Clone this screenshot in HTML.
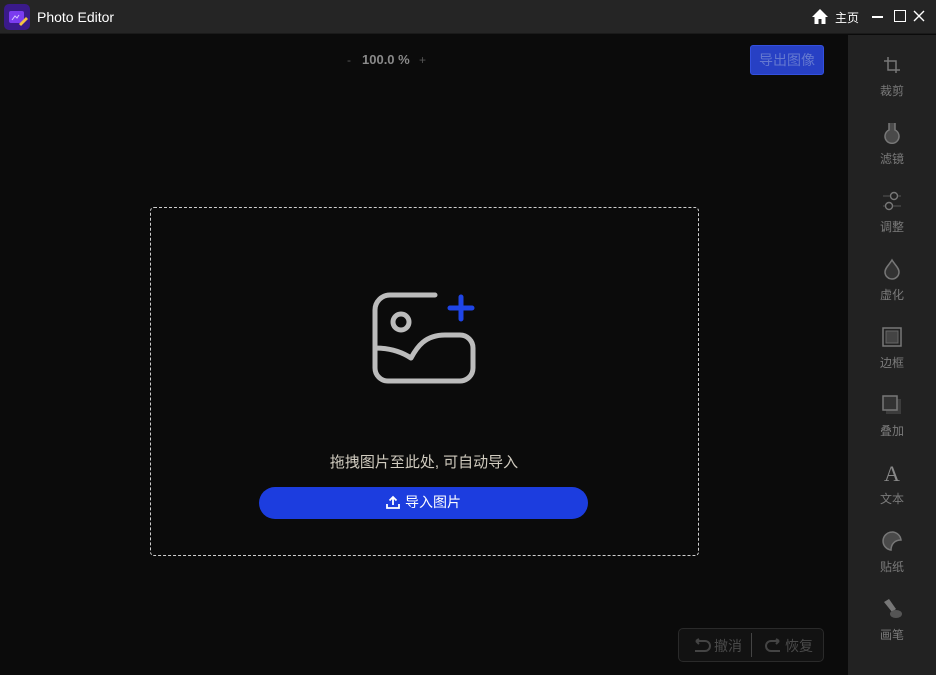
<!DOCTYPE html>
<html><head><meta charset="utf-8"><style>
*{margin:0;padding:0;box-sizing:border-box}
body{width:936px;height:675px;overflow:hidden;background:#0b0b0b;font-family:"Liberation Sans","Noto Sans CJK SC",sans-serif;position:relative}
.title{position:absolute;left:0;top:0;width:936px;height:34px;background:#252525;border-bottom:1px solid #1a1a1a}
.logo{position:absolute;left:4px;top:4px;width:26px;height:26px;border-radius:5px;background:#3a1a8a}
.title .t{position:absolute;left:37px;top:9px;color:#fff;font-size:14px}
.side{position:absolute;left:848px;top:35px;width:88px;height:640px;background:#222}
.tool{position:absolute;left:0;width:88px;text-align:center;color:#7a7a7a;font-size:12px}
.tool svg{display:block;margin:0 auto 6px}
.main{position:absolute;left:0;top:35px;width:848px;height:640px;background:#0b0b0b}
.drop{position:absolute;left:150px;top:207px;width:549px;height:349px;border:1px dashed #cfcfcf;border-radius:4px}
.btn{position:absolute;left:259px;top:487px;width:329px;height:32px;border-radius:16px;background:#1c3ddf;color:#fff;font-size:14px;text-align:center;line-height:31px}
.export{position:absolute;left:750px;top:45px;width:74px;height:30px;border-radius:3px;background:#2740c4;border:1px solid #3350e0;color:#6478d0;font-size:14px;text-align:center;line-height:28px}
.undo{position:absolute;left:678px;top:628px;width:146px;height:34px;border:1px solid #2a2a2a;border-radius:5px;background:#121212;color:#4a4a4a;font-size:14px}
</style></head><body>
<div class="title">
<div class="logo"><svg width="26" height="26"><rect x="5" y="7" width="15" height="12" rx="2" fill="#7b3cf0"/><path d="M8 16l3-4 2 2 2-3" stroke="#d8c8ff" fill="none"/><path d="M15 20l7-7 2 2-7 7z" fill="#f5c542"/></svg></div>
<div class="t">Photo Editor</div>
<svg style="position:absolute;left:811px;top:8px" width="18" height="17"><path d="M9 1L1 9h2.5v7h4v-5h3v5h4V9H17z" fill="#fff"/></svg>
<div style="position:absolute;left:835px;top:9px;color:#fff;font-size:12px">主页</div>
<div style="position:absolute;left:872px;top:16px;width:11px;height:1.5px;background:#fff"></div>
<div style="position:absolute;left:894px;top:10px;width:12px;height:12px;border:1.5px solid #fff"></div>
<svg style="position:absolute;left:913px;top:10px" width="12" height="12"><path d="M1 1l10 10M11 1L1 11" stroke="#fff" stroke-width="1.4"/></svg>
</div>
<div class="main"></div>
<div style="position:absolute;left:347px;top:53px;color:#555;font-size:12px">-</div>
<div style="position:absolute;left:362px;top:52px;color:#8a8a8a;font-size:13px;font-weight:bold">100.0 %</div>
<div style="position:absolute;left:419px;top:53px;color:#555;font-size:12px">+</div>
<div class="export">导出图像</div>
<div class="drop"></div>
<svg style="position:absolute;left:370px;top:290px" width="110" height="100">
<path d="M65 5H20a15 15 0 0 0-15 15v58a13 13 0 0 0 13 13h72a13 13 0 0 0 13-13V58a13 13 0 0 0-13-13H75c-20 0-28 12-34 23-9-6-20-10-36-10" fill="none" stroke="#bcbcbc" stroke-width="5" stroke-linecap="round" stroke-linejoin="round"/>
<circle cx="31" cy="32" r="8" fill="none" stroke="#bcbcbc" stroke-width="5"/>
<path d="M91 7v22M80 18h22" stroke="#1f45e6" stroke-width="5" stroke-linecap="round"/>
</svg>
<div style="position:absolute;left:0;width:848px;top:451px;text-align:center;color:#d0cbbf;font-size:15px">拖拽图片至此处, 可自动导入</div>
<div class="btn"><svg width="14" height="14" style="vertical-align:-2px;margin-right:5px"><path d="M7 10V2M3.5 5.5L7 2l3.5 3.5M1 9v4h12V9" stroke="#fff" stroke-width="1.8" fill="none"/></svg>导入图片</div>
<div class="undo">
<svg style="position:absolute;left:13px;top:9px" width="20" height="16"><path d="M4 3h9a5 5 0 0 1 0 10H3M4 3l3-2M4 3l3 3" stroke="#444" stroke-width="2" fill="none"/></svg>
<span style="position:absolute;left:35px;top:7px">撤消</span>
<div style="position:absolute;left:72px;top:4px;width:1px;height:24px;background:#444"></div>
<svg style="position:absolute;left:84px;top:9px" width="20" height="16"><path d="M16 3H8a5 5 0 0 0 0 10h9M16 3l-3-2M16 3l-3 3" stroke="#444" stroke-width="2" fill="none"/></svg>
<span style="position:absolute;left:106px;top:7px">恢复</span>
</div>
<div class="side">
<div class="tool" style="top:19px"><svg width="22" height="22"><path d="M7 3v13h12M3 7h12v12" stroke="#777" stroke-width="1.5" fill="none"/></svg>裁剪</div>
<div class="tool" style="top:87px"><svg width="22" height="22"><path d="M8 1v7a7 7 0 1 0 6 0V1" stroke="#777" stroke-width="1.5" fill="#4a4a4a"/></svg>滤镜</div>
<div class="tool" style="top:155px"><svg width="22" height="22"><circle cx="13" cy="6" r="3.5" stroke="#777" stroke-width="1.4" fill="none"/><circle cx="8" cy="16" r="3.5" stroke="#777" stroke-width="1.4" fill="none"/><path d="M2 6h7M17 6h3M2 16h2M12 16h8" stroke="#555"/></svg>调整</div>
<div class="tool" style="top:223px"><svg width="22" height="22"><path d="M11 2C8 7 4 10 4 14a7 7 0 0 0 14 0c0-4-4-7-7-12z" stroke="#777" stroke-width="1.5" fill="#333"/></svg>虚化</div>
<div class="tool" style="top:291px"><svg width="22" height="22"><rect x="2" y="2" width="18" height="18" stroke="#777" stroke-width="1.5" fill="none"/><rect x="5" y="5" width="12" height="12" stroke="#666" fill="#444"/></svg>边框</div>
<div class="tool" style="top:359px"><svg width="22" height="22"><rect x="5" y="5" width="15" height="15" fill="#3c3c3c"/><rect x="2" y="2" width="14" height="14" stroke="#777" stroke-width="1.5" fill="#333"/></svg>叠加</div>
<div class="tool" style="top:427px"><svg width="22" height="22"><text x="3" y="19" font-family="Liberation Serif" font-size="22" fill="#888">A</text></svg>文本</div>
<div class="tool" style="top:495px"><svg width="22" height="22"><path d="M20 10A9 9 0 1 0 10 20c0-6 4-10 10-10z" stroke="#777" stroke-width="1.5" fill="#4a4a4a"/></svg>贴纸</div>
<div class="tool" style="top:563px"><svg width="22" height="22"><path d="M3 4l5-3 7 10-4 3z" fill="#777"/><ellipse cx="15" cy="16" rx="6" ry="4" fill="#555"/></svg>画笔</div>
</div>
</body></html>
